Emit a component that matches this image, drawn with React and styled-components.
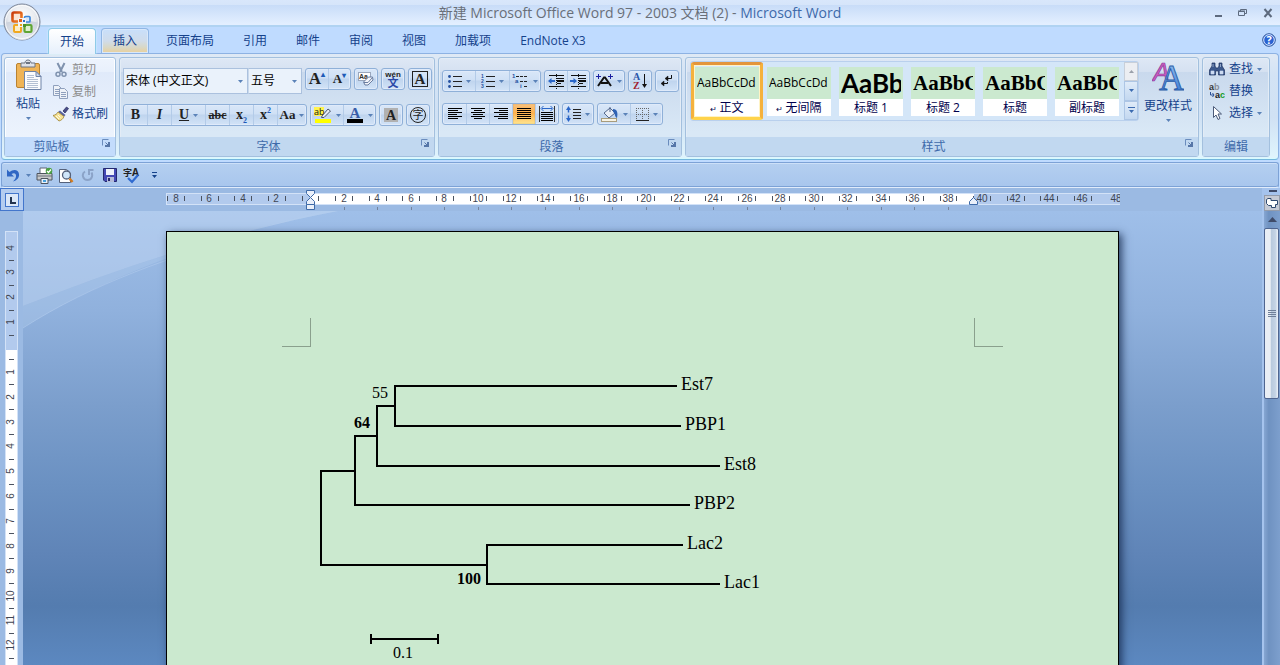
import React from "react";
import styled, { createGlobalStyle, css } from "styled-components";

const GlobalStyle = createGlobalStyle`
  * {
    box-sizing: border-box;
  }
  body {
    margin: 0;
    overflow: hidden;
    font-family: "Open Sans", "Noto Sans CJK SC", sans-serif;
    font-size: 12px;
    line-height: 16px;
    color: #15428b;
  }
  button,
  select {
    font: inherit;
    color: inherit;
  }
`;

const Window = styled.div`
  position: relative;
  display: flex;
  flex-direction: column;
  height: 100vh;
  background: #bfdbff;
`;

const plainButton = css`
  display: flex;
  align-items: center;
  justify-content: center;
  padding: 0;
  border: 0;
  background: none;
  white-space: nowrap;
`;

/* title bar */

const TitleBar = styled.header`
  display: grid;
  grid-template-columns: 1fr auto 1fr;
  align-items: center;
  flex: none;
  height: 27px;
  border-bottom: 2px solid #b0d3f2;
  background: linear-gradient(
    #d9e7fb 0,
    #d6e5fa 5px,
    #c8dcf8 5px,
    #e3efff 24px
  );
`;

const WindowTitle = styled.h1`
  grid-column: 2;
  margin: 0;
  font-size: 14px;
  font-weight: 400;
  line-height: 20px;
  color: #696f79;
  span {
    color: #3e6aaa;
  }
`;

const WindowControls = styled.div`
  display: flex;
  justify-content: flex-end;
`;

const WindowButton = styled.button`
  ${plainButton}
  width: 25px;
  height: 20px;
`;

const OfficeButton = styled.button`
  ${plainButton}
  position: absolute;
  left: 3px;
  top: 3px;
  width: 38px;
  height: 38px;
`;

/* tabs */

const TabRow = styled.nav`
  display: flex;
  align-items: flex-end;
  gap: 5px;
  flex: none;
  height: 26px;
  padding: 0 3px 0 48px;
`;

const Tab = styled.button`
  ${plainButton}
  height: 25px;
  padding: 0 11px;
  border: 1px solid transparent;
  border-bottom: 0;
  border-radius: 4px 4px 0 0;
  ${({ $state }) =>
    $state === "active" &&
    css`
      position: relative;
      margin-bottom: -1px;
      height: 26px;
      border-color: #8ecbe8;
      background: linear-gradient(#ffffff, #e6f0fc);
      box-shadow: 0 0 2px #d4fbff;
    `}
  ${({ $state }) =>
    $state === "hover" &&
    css`
      border-color: #90b6e4;
      background: linear-gradient(#c8dffb, #d0dcea 50%, #d8d8c8 75%, #ead09a);
      box-shadow: inset 0 0 0 1px #d9e8fa;
    `}
`;

const HelpButton = styled.button`
  ${plainButton}
  width: 16px;
  height: 26px;
  margin-left: auto;
`;

/* ribbon */

const Ribbon = styled.section`
  display: flex;
  gap: 3px;
  flex: none;
  margin: 0 1px;
  padding: 3px 8px 2px 2px;
  border: 1px solid #8db2e3;
  border-bottom-color: #74b6dc;
  border-radius: 4px;
  background: linear-gradient(#dfe9f5, #d3e3f5 20%, #d0e1f4 60%, #e0f5fd);
  box-shadow: inset 0 -1px 0 #d6fbff;
`;

const GroupBox = styled.section`
  display: flex;
  flex-direction: column;
  flex: ${({ $grow }) => ($grow ? "1 1 0" : "none")};
  width: ${({ $width }) => $width || "auto"};
  min-width: 0;
  height: 100px;
  border: 1px solid #a3c0de;
  border-radius: 3px;
  background: ${({ $hover }) =>
    $hover
      ? "linear-gradient(#eef4fd 0, #e8f0fc 14px, #e0eafa 14px, #f0f6fe)"
      : "linear-gradient(#dee8f5 0, #d5e1f1 14px, #c9d9ed 14px, #d9e8f6 75%)"};
  box-shadow: inset 0 0 0 1px ${({ $hover }) => ($hover ? "#fdfeff" : "#e3ecf6")};
`;

const GroupBody = styled.div`
  flex: 1;
  display: flex;
  flex-direction: ${({ $row }) => ($row ? "row" : "column")};
  gap: ${({ $gap }) => $gap || "0"};
  min-height: 0;
  padding: ${({ $pad }) => $pad || "0 3px"};
`;

const GroupTitle = styled.div`
  display: flex;
  align-items: center;
  flex: none;
  height: 19px;
  background: ${({ $hover }) => ($hover ? "#c3dcfc" : "#c1d8f0")};
  color: #3e6aaa;
  h2 {
    flex: 1;
    margin: 0;
    font-size: 12px;
    font-weight: 400;
    text-align: center;
  }
`;

const Launcher = styled.button`
  ${plainButton}
  align-items: flex-start;
  width: 17px;
  height: 15px;
`;

const Row = styled.div`
  display: flex;
  align-items: flex-start;
  gap: 3px;
  height: ${({ $height }) => $height || "22px"};
`;

const ButtonSet = styled.div`
  display: flex;
  height: 22px;
  border: 1px solid #8fb0d8;
  border-radius: 3px;
  background: linear-gradient(#d9e7f8 0, #cfe0f5 9px, #bfd4ee 10px, #d2e3f7);
  box-shadow: inset 0 0 0 1px #dfeafa;
`;

const ToolButton = styled.button`
  ${plainButton}
  gap: 4px;
  width: ${({ $width }) => $width || "22px"};
  color: #222;
  & + & {
    border-left: 1px solid #b3cbe8;
  }
  ${({ $pressed }) =>
    $pressed &&
    css`
      background: linear-gradient(#f9c27e, #fdb14e 45%, #ffe58f);
      box-shadow: inset 0 0 1px #8b7654;
    `}
`;

const Letter = styled.span`
  font-family: "Liberation Serif", serif;
  font-size: ${({ $size }) => $size || "14px"};
  font-weight: 700;
  font-style: ${({ $italic }) => ($italic ? "italic" : "normal")};
  text-decoration: ${({ $line }) => $line || "none"};
  line-height: 14px;
  sub,
  sup {
    font-size: 8px;
    line-height: 0;
    color: #1e5bb8;
  }
`;

const Combo = styled.label`
  position: relative;
  display: flex;
  align-items: center;
  flex: none;
  width: ${({ $width }) => $width};
  height: 26px;
  border: 1px solid #abc1de;
  background: #eaf2fb;
  & + & {
    margin-left: -3px;
    border-left-color: #c9d9ec;
  }
  svg {
    position: absolute;
    right: 4px;
    pointer-events: none;
  }
`;

const ComboSelect = styled.select`
  appearance: none;
  width: 100%;
  height: 24px;
  padding: 0 14px 0 2px;
  border: 0;
  background: none;
  color: #000;
`;

const LargeButton = styled.button`
  ${plainButton}
  flex-direction: column;
  justify-content: flex-start;
  flex: none;
  gap: 5px;
  width: ${({ $width }) => $width};
`;

const CommandList = styled.div`
  display: flex;
  flex-direction: column;
`;

const Command = styled.button`
  ${plainButton}
  justify-content: flex-start;
  gap: ${({ $gap }) => $gap || "3px"};
  height: 22px;
  color: ${({ disabled }) => (disabled ? "#8d8d8d" : "#15428b")};
`;

/* style gallery */

const Gallery = styled.div`
  display: flex;
  flex: 1;
  min-width: 0;
  height: 60px;
  border: 1px solid #b9d0ed;
  border-radius: 3px;
  background: #d4e6f8;
`;

const GalleryItems = styled.div`
  display: flex;
  flex: 1;
  min-width: 0;
  overflow: hidden;
`;

const StyleCard = styled.button`
  ${plainButton}
  flex: none;
  flex-direction: column;
  align-items: stretch;
  width: 72px;
  padding: 4px;
  color: #00004c;
  ${({ $selected }) =>
    $selected &&
    css`
      padding: 1px;
      border: 3px solid #f5b13d;
      border-color: #e3953c #f5b13d #ffd34b;
      border-radius: 3px;
      box-shadow: inset 0 0 0 1px #fff3c4;
    `}
`;

const StylePreview = styled.span`
  height: 32px;
  padding: 0 2px;
  background: #cbe9cf;
  color: #000;
  text-align: left;
`;

const StyleSample = styled.span`
  display: block;
  overflow: hidden;
  font-family: ${({ $font }) => $font || "inherit"};
  font-size: ${({ $size }) => $size || "12px"};
  font-weight: ${({ $size }) => ($size ? 700 : 400)};
  line-height: 32px;
`;

const StyleName = styled.span`
  height: 17px;
  background: #fff;
  line-height: 17px;
  small {
    font-size: 8px;
  }
`;

const GalleryScroll = styled.div`
  display: grid;
  flex: none;
  grid-template-rows: repeat(3, 1fr);
  width: 14px;
  button {
    ${plainButton}
    border: 1px solid #adc6e5;
    background: linear-gradient(#dfebf9, #c3d8f0);
  }
  button:disabled {
    border-color: #c8cfd9;
    background: #eceef2;
  }
`;

/* quick access */

const QuickAccess = styled.div`
  display: flex;
  align-items: center;
  flex: none;
  height: 26px;
  margin: 2px 1px 0;
  border: 1px solid #7da2d6;
  border-bottom-color: #e1ecfb;
  border-radius: 3px;
  background: linear-gradient(#b4cff0, #a8c6ed);
  box-shadow: inset 0 1px 0 #cde0f8, inset 0 -1px 0 #7da2d6;
`;

const QuickButton = styled.button`
  ${plainButton}
  width: ${({ $width }) => $width || "22px"};
  height: 22px;
`;

/* document area */

const Workspace = styled.main`
  display: flex;
  flex: 1;
  min-height: 0;
  background: #9bbae3;
`;

const DocumentColumn = styled.div`
  display: flex;
  flex-direction: column;
  flex: 1;
  min-width: 0;
`;

const RulerRow = styled.div`
  display: flex;
  flex: none;
  height: 23px;
`;

const TabSelector = styled.button`
  ${plainButton}
  flex: none;
  width: 24px;
  border: 1px solid #4376cc;
  background: #b5cdf0;
`;

const RulerCenter = styled.div`
  display: flex;
  flex: 1;
  justify-content: center;
`;

const CanvasRow = styled.div`
  display: flex;
  flex: 1;
  min-height: 0;
`;

const SideRuler = styled.div`
  flex: none;
  width: 23px;
  overflow: hidden;
`;

const Canvas = styled.div`
  position: relative;
  display: flex;
  justify-content: center;
  flex: 1;
  padding-top: 20px;
  overflow: hidden;
  background: linear-gradient(
    #9fbfe9 0,
    #90b1dd 22%,
    #7b9ecc 43%,
    #6b91c2 60%,
    #5f84b7 76%,
    #547caf 87%,
    #5c88c0 100%
  );
`;

const Swoosh = styled.svg`
  position: absolute;
  left: 0;
  top: 0;
`;

const Paper = styled.article`
  position: relative;
  flex: none;
  width: 953px;
  height: 1300px;
  padding-top: 86px;
  border: 1px solid #000;
  background: #cbe9cf;
  box-shadow: 3px 3px 8px rgba(20, 40, 75, 0.8);
`;

const MarginMarks = styled.div`
  display: flex;
  justify-content: space-between;
  padding: 0 115px;
`;

const MarginMark = styled.span`
  width: 29px;
  height: 29px;
  border: 0 solid #8aa08d;
  border-bottom-width: 1px;
  ${({ $side }) =>
    $side === "left" ? "border-right-width: 1px;" : "border-left-width: 1px;"}
`;

const Figure = styled.figure`
  margin: 0 144px;
`;

const ScrollColumn = styled.div`
  display: flex;
  flex-direction: column;
  flex: none;
  width: 18px;
  border-left: 2px solid #a5c3ed;
  background: linear-gradient(90deg, #86a6d2, #6f92c1 30%, #7d9fcd);
`;

const SplitHandle = styled.div`
  flex: none;
  height: 7px;
  background: #a5c3ed;
  padding: 2px 3px 0 5px;
  &::before {
    content: "";
    display: block;
    height: 2px;
    background: #3f4b69;
  }
`;

const RulerToggle = styled.button`
  ${plainButton}
  flex: none;
  height: 16px;
  border: 1px solid #949cab;
  background: #c5cad5;
`;

const ScrollArrow = styled.button`
  ${plainButton}
  flex: none;
  height: 17px;
`;

const ScrollThumb = styled.div`
  display: flex;
  align-items: center;
  justify-content: center;
  flex: none;
  height: 171px;
  margin-right: 1px;
  border: 1px solid #4f6590;
  border-radius: 2px;
  background: linear-gradient(90deg, #e9eef5 0 40%, #b9cade 50%, #c4d3e5 80%, #edf2f8);
`;

/* icons */

const Caret = ({ color = "#5a82b8" }) => (
  <svg width="5" height="3" viewBox="0 0 5 3">
    <path d="M0 0h5L2.5 3z" fill={color} />
  </svg>
);

const OfficeLogo = () => (
  <svg width="38" height="38" viewBox="0 0 38 38">
    <defs>
      <radialGradient id="orb" cx="50%" cy="35%" r="65%">
        <stop offset="0" stopColor="#ffffff" />
        <stop offset="0.6" stopColor="#e6e9ee" />
        <stop offset="1" stopColor="#a9b1c0" />
      </radialGradient>
      <linearGradient id="orbLow" x1="0" y1="0" x2="0" y2="1">
        <stop offset="0" stopColor="#c3cad6" />
        <stop offset="1" stopColor="#f4f6fa" />
      </linearGradient>
      <linearGradient id="flame" x1="0" y1="0" x2="1" y2="1">
        <stop offset="0" stopColor="#c93a0c" />
        <stop offset="1" stopColor="#f58a2a" />
      </linearGradient>
    </defs>
    <circle cx="19" cy="19" r="18" fill="url(#orb)" stroke="#7c8699" />
    <path d="M2 20a17 17 0 0 0 34 0c-9-3-25-3-34 0z" fill="url(#orbLow)" opacity="0.8" />
    <circle cx="19" cy="19" r="16.500" fill="none" stroke="#fff" opacity="0.8" />
    <rect x="9.500" y="9.500" width="9" height="9" rx="1.500" fill="#fbe4d4" stroke="url(#flame)" strokeWidth="2.600" />
    <rect x="21.500" y="13.500" width="5.500" height="5.500" rx="1" fill="#d9e9fb" stroke="#3f88da" strokeWidth="1.700" />
    <rect x="11" y="22" width="7" height="7" rx="1" fill="#fdeec5" stroke="#f1a820" strokeWidth="2" />
    <rect x="21.500" y="22" width="7" height="7" rx="1" fill="#dff0cc" stroke="#5fa534" strokeWidth="2.200" />
    <path d="M15 15h8v9h-8z" fill="#f3f4f6" />
    <rect x="16" y="16" width="3" height="3" fill="#e0601a" />
    <rect x="20" y="17" width="2" height="2" fill="#2d6fc6" />
    <rect x="17" y="21" width="2" height="2" fill="#eaa015" />
    <rect x="20" y="21" width="3" height="3" fill="#4c9128" />
  </svg>
);

const PasteIcon = () => (
  <svg width="32" height="32" viewBox="0 0 32 32">
    <rect x="4.500" y="4.500" width="23" height="24" rx="1.500" fill="#efb457" stroke="#b98231" />
    <path d="M9 8V4h4c0-4 6-4 6 0h4v4z" fill="#dfe2e8" stroke="#6c7482" />
    <path d="M14 4h4" stroke="#6c7482" strokeWidth="2" />
    <path d="M12.500 12.500H24l5 5V30.500H12.500z" fill="#fbfcfe" stroke="#6f84a8" />
    <path d="M24 12.500v5h5z" fill="#cfd9ea" stroke="#6f84a8" />
    <path d="M15 16.500h7M15 18.500h7M15 20.500h11M15 22.500h11M15 24.500h11M15 26.500h11M15 28.500h11" stroke="#b4c0d3" />
  </svg>
);

const CutIcon = () => (
  <svg width="16" height="16" viewBox="0 0 16 16" fill="none" stroke="#7f92ae">
    <path d="M4.500 1l4.500 9M11.500 1L7 10" strokeWidth="2" />
    <circle cx="5" cy="12.300" r="2" strokeWidth="1.500" />
    <circle cx="11" cy="12.300" r="2" strokeWidth="1.500" />
  </svg>
);

const CopyIcon = () => (
  <svg width="16" height="16" viewBox="0 0 16 16" fill="#eef2f8" stroke="#8fa0bd">
    <path d="M.5 1.500h5l3 3v7h-8z" />
    <path d="M2 5.500h4M2 7.500h4M2 9.500h4" />
    <path d="M6.500 4.500h5l3 3v7h-8z" />
    <path d="M8 8.500h5M8 10.500h5M8 12.500h5" />
  </svg>
);

const BrushIcon = () => (
  <svg width="16" height="16" viewBox="0 0 16 16">
    <path d="M10 5l3.500-4 2 1.500L12 7z" fill="#4a4f8a" stroke="#25285c" strokeWidth="0.700" />
    <path d="M7 4.500l5.500 4.500-1.500 1.500-6-4.500z" fill="#59639e" />
    <path d="M5 6l6 4.500c-1 2.500-3 4-5 4.500L0 9.500C2.500 9 4 8 5 6z" fill="#f5e194" stroke="#9c8230" strokeWidth="0.800" />
    <path d="M3 10l3 3M5 9l2.500 2.500" stroke="#fffbe0" />
  </svg>
);

const LauncherIcon = () => (
  <svg width="9" height="9" viewBox="0 0 9 9" fill="none">
    <path d="M.5 6.500V.5h6" stroke="#6a8cbd" />
    <path d="M3.500 3.500l3 3" stroke="#5676a8" />
    <path d="M7 3v4H3" stroke="#5676a8" strokeWidth="2" />
  </svg>
);

const EraserIcon = () => (
  <svg width="18" height="16" viewBox="0 0 18 16">
    <rect x="1.500" y="1.500" width="12" height="8" fill="#fff" stroke="#9aa7bd" />
    <text x="2" y="8" fontFamily="Liberation Sans" fontSize="7" fontWeight="700" fill="#333">Aa</text>
    <path d="M6.500 11l5-5h4l.5 3-5 5H8z" fill="#f3f5fa" stroke="#6a7da0" />
    <path d="M7 11.500h4l4.500-5" fill="none" stroke="#6a7da0" />
  </svg>
);

const PhoneticIcon = () => (
  <svg width="20" height="20" viewBox="0 0 20 20">
    <text x="10" y="8" textAnchor="middle" fontFamily="Liberation Sans" fontSize="8" fontWeight="700" fill="#222">wén</text>
    <text x="10" y="18" textAnchor="middle" fontSize="11" fontWeight="700" fill="#2b49a8">文</text>
  </svg>
);

const HighlightIcon = () => (
  <svg width="18" height="18" viewBox="0 0 18 18">
    <rect x="0" y="1" width="10" height="9" fill="#fff34d" />
    <text x="0" y="9" fontSize="9" fill="#111">ab</text>
    <path d="M8 10l6-7 2.500 2L10 11.500H7.500z" fill="#e8edf5" stroke="#49566e" />
    <rect x="1" y="13" width="16" height="4" fill="#ffff00" />
  </svg>
);

const FontColorIcon = () => (
  <svg width="18" height="18" viewBox="0 0 18 18">
    <text x="9" y="12" textAnchor="middle" fontFamily="Liberation Serif" fontWeight="700" fontSize="15" fill="#3a5da8">A</text>
    <rect x="1" y="13" width="16" height="4" fill="#000" />
  </svg>
);

const ListIcon = ({ numbered }) => (
  <svg width="14" height="16" viewBox="0 0 14 16">
    {[3, 8, 13].map((y, i) => (
      <g key={y}>
        {numbered ? (
          <text x="0" y={y + 2} fontFamily="Liberation Sans" fontSize="5" fontWeight="700" fill="#2450a0">{i + 1}</text>
        ) : (
          <circle cx="1.500" cy={y + 0.5} r="1.400" fill="#2450a0" />
        )}
        <path d={`M5 ${y + 0.5}h9`} stroke="#222" />
      </g>
    ))}
  </svg>
);

const MultiListIcon = () => (
  <svg width="17" height="16" viewBox="0 0 17 16">
    <g fontFamily="Liberation Sans" fontSize="6" fontWeight="700" fill="#2450a0">
      <text x="0" y="5">1</text>
      <text x="3" y="10">a</text>
      <text x="8" y="15">i</text>
    </g>
    <path d="M4 3.500h11M8 8.500h8M12 13.500h4" stroke="#222" strokeDasharray="3 1" />
  </svg>
);

const IndentIcon = ({ right }) => (
  <svg width="17" height="16" viewBox="0 0 17 16">
    <path d="M1 2.500h15M9 5.500h7M9 10.500h4M1 13.500h15" stroke="#111" />
    <path d="M9 8h7" stroke="#111" strokeWidth="2" />
    <path d="M8.500 1v15" stroke="#111" strokeDasharray="1 1" />
    <path d={right ? "M7 8L3.500 5v2H0v2h3.500v2z" : "M0 8l3.500-3v2H7v2H3.500v2z"} fill="#2a66c8" />
  </svg>
);

const AsianLayoutIcon = () => (
  <svg width="17" height="14" viewBox="0 0 17 14" fill="none">
    <path d="M2 12L8 3.500h1L15 12M5 9h7" stroke="#111" strokeWidth="2" />
    <path d="M2.500 0v5M0 2.500h5M14.500 0v5M12 2.500h5" stroke="#1b1fa0" />
  </svg>
);

const SortIcon = () => (
  <svg width="17" height="18" viewBox="0 0 17 18">
    <g fontFamily="Liberation Serif" fontWeight="700" fontSize="10">
      <text x="1" y="8" fill="#2a56a8">A</text>
      <text x="1" y="17" fill="#a02030">Z</text>
    </g>
    <path d="M12.500 2v12" stroke="#111" />
    <path d="M10 12h5l-2.500 4z" fill="#111" />
  </svg>
);

const MarksIcon = () => (
  <svg width="14" height="16" viewBox="0 0 14 16" fill="none" stroke="#111">
    <path d="M11.500 2v3.500H6M7.500 9v1.500H2" />
    <path d="M8 3v5L5 5.500zM4 8v5l-3-2.500z" fill="#111" strokeWidth="0.500" />
  </svg>
);

const alignments = {
  left: [14, 10, 14, 9, 14, 10],
  center: [14, 8, 14, 10, 14, 8],
  right: [14, 9, 14, 9, 14, 10],
  justify: [14, 14, 14, 14, 14, 14],
};

const AlignIcon = ({ kind }) => (
  <svg width="14" height="13" viewBox="0 0 14 13">
    {alignments[kind].map((w, i) => {
      let x = 0;
      if (kind === "center") x = (14 - w) / 2;
      if (kind === "right") x = 14 - w;
      return <rect key={i} x={x} y={i * 2} width={w} height="1" fill="#000" />;
    })}
  </svg>
);

const DistributeIcon = () => (
  <svg width="16" height="16" viewBox="0 0 16 16" fill="none">
    <path d="M.5 0v16M15.500 0v16" stroke="#333" />
    <path d="M2 6.500h12M2 8.500h12M2 10.500h12M2 12.500h12M2 14.500h12" stroke="#000" />
    <path d="M3 2.500h10M4.500 0L2 2.500 4.500 5M11.500 0L14 2.500 11.500 5" stroke="#2a66c8" />
  </svg>
);

const SpacingIcon = () => (
  <svg width="15" height="16" viewBox="0 0 15 16">
    <path d="M2.500 3v3.500M2.500 9.500V13" stroke="#2a66c8" strokeWidth="1.500" />
    <path d="M0 4l2.500-4L5 4zM0 12l2.500 4L5 12z" fill="#2a66c8" />
    <path d="M7 3.500h8M7 6.500h8M7 9.500h8M7 12.500h8" stroke="#222" />
  </svg>
);

const FillIcon = () => (
  <svg width="18" height="16" viewBox="0 0 18 16">
    <path d="M3 7l6-5 5 5-6 5z" fill="#e9eef7" stroke="#53678c" />
    <path d="M9 6V1" stroke="#53678c" />
    <path d="M12 3c4.500 0 5 4 4 9-2.500-1-1.500-5-4-6z" fill="#2f62b4" />
    <rect x="0.500" y="12.500" width="15" height="3" fill="#f7f3e4" stroke="#a89c7c" />
  </svg>
);

const BorderIcon = () => (
  <svg width="13" height="13" viewBox="0 0 13 13" stroke="#666" fill="none">
    <path d="M.5 0v12M6.500 0v12M12.500 0v12M0 .5h13M0 6.500h13" strokeDasharray="1 1" />
    <path d="M0 12.500h13" stroke="#222" />
  </svg>
);

const ChangeStylesIcon = () => (
  <svg width="32" height="32" viewBox="0 0 32 32">
    <defs>
      <linearGradient id="blueLetter" x1="0" y1="0" x2="0" y2="1">
        <stop offset="0" stopColor="#9cc8f5" />
        <stop offset="1" stopColor="#2f6fd0" />
      </linearGradient>
    </defs>
    <text x="1" y="20" fontFamily="Liberation Sans" fontStyle="italic" fontSize="25" fill="#cf5cc0" stroke="#8a3c9c" strokeWidth="0.700">A</text>
    <text x="7" y="29" fontFamily="Liberation Serif" fontSize="35" fill="url(#blueLetter)" stroke="#2c5da8" strokeWidth="0.900">A</text>
  </svg>
);

const FindIcon = () => (
  <svg width="16" height="14" viewBox="0 0 16 14">
    <path d="M3 1h3v3l1 2h2l1-2V1h3v3l2.500 4v5H9.500V9h-3v4H.5V8L3 4z" fill="#3c588c" stroke="#1d3260" strokeWidth="0.700" />
    <path d="M2 9h3v3H2zM11 9h3v3h-3zM4 2v3M11.500 2v3" fill="#cddcf2" stroke="#cddcf2" strokeWidth="0.600" />
  </svg>
);

const ReplaceIcon = () => (
  <svg width="16" height="16" viewBox="0 0 16 16" fontFamily="Liberation Sans" fontSize="9" fontWeight="700">
    <text x="0" y="7" fill="#333">a<tspan fill="#8a8f99">b</tspan></text>
    <text x="6" y="15" fill="#222">a<tspan fill="#179c28">c</tspan></text>
    <path d="M1.500 9v3h3M3.500 10l1.500 2-1.500 2" fill="none" stroke="#2a4f96" />
  </svg>
);

const SelectIcon = () => (
  <svg width="16" height="16" viewBox="0 0 16 16">
    <path d="M4.500 1.500v11l2.500-2.500 2 4.500 2-1-2-4.500h3.500z" fill="#fff" stroke="#4b5a78" />
  </svg>
);

const UndoIcon = () => (
  <svg width="14" height="16" viewBox="0 0 14 16">
    <path d="M1 2.500v7h7L5.500 7c3-2 5 0 4.500 2.500-.3 2-1.500 3.500-3 5 4-1 6.500-4 6-7.500C12.500 2.500 7.500 1.500 3.500 5z" fill="#2f66c4" />
  </svg>
);

const RedoIcon = () => (
  <svg width="14" height="16" viewBox="0 0 14 16" fill="none" stroke="#8ba3c8" strokeWidth="2">
    <path d="M4 4.500C0 7 2 13 6.500 13S12 8.500 10.500 5.500" />
    <path d="M8 8V3h4.500" />
  </svg>
);

const PrintIcon = () => (
  <svg width="17" height="17" viewBox="0 0 17 17">
    <path d="M4 1h7v6H4z" fill="#fff" stroke="#5e6574" />
    <path d="M1 6.500h15v6.500H1z" fill="#c7c8c9" stroke="#4e545f" />
    <path d="M1 9h15" stroke="#6b707a" />
    <path d="M5 11.500h7v5H5z" fill="#e9f2fc" stroke="#4e545f" />
    <path d="M7 14h3" stroke="#48a0dc" strokeWidth="2" />
    <circle cx="13" cy="4" r="3.300" fill="#4ba043" />
    <path d="M11 4l1.500 1.500L15 2.500" stroke="#fff" fill="none" strokeWidth="1.200" />
  </svg>
);

const PreviewIcon = () => (
  <svg width="16" height="17" viewBox="0 0 16 17">
    <path d="M1.500 2.500h7l4 3.500v9.500h-11z" fill="#fff" stroke="#55617a" />
    <circle cx="8.500" cy="8" r="4" fill="#cfe6fa" stroke="#55617a" strokeWidth="1.300" />
    <path d="M11.500 11.500l3 3.500" stroke="#d07a20" strokeWidth="2.500" />
  </svg>
);

const SaveIcon = () => (
  <svg width="14" height="14" viewBox="0 0 14 14">
    <path d="M.5.5h13v13H2l-1.500-1.500z" fill="#4348b4" stroke="#25296e" />
    <rect x="3" y="1" width="8" height="6" fill="#eef2fb" />
    <rect x="4" y="9" width="7" height="5" fill="#b4bbd8" />
    <rect x="5" y="10" width="2" height="3" fill="#25296e" />
  </svg>
);

const SpellIcon = () => (
  <svg width="18" height="17" viewBox="0 0 18 17">
    <text x="0" y="9" fontSize="9" fontWeight="700" fill="#222">字</text>
    <text x="9" y="9" fontSize="10" fontWeight="700" fill="#222">A</text>
    <path d="M5 11l4 4 6-7" fill="none" stroke="#2f6ad0" strokeWidth="2.200" />
  </svg>
);

const HelpIcon = () => (
  <svg width="14" height="14" viewBox="0 0 14 14">
    <circle cx="7" cy="7" r="6.300" fill="#2a63d2" stroke="#3a5f9c" />
    <circle cx="7" cy="7" r="5.300" fill="none" stroke="#dfeaff" />
    <text x="7" y="11" textAnchor="middle" fontSize="11" fontWeight="700" fill="#fff">?</text>
  </svg>
);

/* horizontal scale: the unit is one character of body text */

const scaleFont = '"Liberation Sans Narrow", "Liberation Sans", sans-serif';

const CHAR = 16.79;
const ZERO = 144;
const evens = Array.from({ length: 29 }, (_, i) => i * 2 - 8);
const halves = Array.from({ length: 56 }, (_, i) => i - 8.5);

const HorizontalRuler = () => (
  <svg width="954" height="23" viewBox="0 0 954 23">
    <rect x="0" y="5" width="954" height="12" fill="#b2caed" />
    <rect x={ZERO} y="5" width="664" height="12" fill="#fff" />
    <path d="M0 5.500h954M0 16.500h954M.5 5v12" stroke="#d3e2f7" />
    {halves.map((u) => (
      <rect key={u} x={Math.round(ZERO + u * CHAR)} y="8" width="1" height="5" fill="#4b5361" />
    ))}
    <g fontFamily={scaleFont} fontSize="10" fill="#3f4653" textAnchor="middle">
      {evens
        .filter((n) => n !== 0)
        .map((n) => (
          <text key={n} x={Math.round(ZERO + n * CHAR)} y="14">{Math.abs(n)}</text>
        ))}
    </g>
    {evens
      .filter((n) => n > 0 && n < 39)
      .map((n) => (
        <rect key={n} x={Math.round(ZERO + n * CHAR)} y="19" width="1" height="3" fill="#74839c" />
      ))}
    <g fill="#eaf0fa" stroke="#3f6ba8">
      <path d="M140.500 2.500h8v3l-4 4-4-4z" />
      <path d="M144.500 9.500l4 4v3h-8v-3z" />
      <path d="M140.500 16.500h8v5h-8z" />
      <path d="M807.500 9.500l4 4v3h-8v-3z" />
    </g>
  </svg>
);

/* vertical scale: about 25px per unit, zero where the body text starts */

const STEP = 24.85;
const VZERO = 136;
const rows = Array.from({ length: 17 }, (_, i) => i - 4);

const VerticalRuler = () => (
  <svg width="23" height="600" viewBox="0 0 23 600">
    <rect x="5" y="20" width="13" height="119" fill="#b2caed" />
    <rect x="5" y="139" width="13" height="461" fill="#fff" />
    <path d="M5.500 20v580M17.500 20v580M5 20.500h13" stroke="#d3e2f7" />
    {rows.map((n) => {
      const y = Math.round(VZERO + n * STEP);
      const mid = Math.round(VZERO + (n + 0.5) * STEP);
      return (
        <g key={n}>
          {n !== 0 && (
            <text
              x="14"
              y={y}
              transform={`rotate(-90 14 ${y})`}
              textAnchor="middle"
              fontFamily={scaleFont}
              fontSize="10"
              fill="#3f4653"
            >
              {Math.abs(n)}
            </text>
          )}
          <rect x="9" y={mid} width="5" height="1" fill="#4b5361" />
        </g>
      );
    })}
  </svg>
);

/* phylogenetic tree */

const leaves = [
  { name: "Est7", from: 84, to: 366, y: 39 },
  { name: "PBP1", from: 84, to: 370, y: 79 },
  { name: "Est8", from: 66, to: 409, y: 119 },
  { name: "PBP2", from: 44, to: 379, y: 158 },
  { name: "Lac2", from: 176, to: 372, y: 198 },
  { name: "Lac1", from: 176, to: 409, y: 237 },
];

const TreeFigure = () => (
  <svg width="663" height="330" viewBox="0 0 663 330" role="img" aria-label="Est7 PBP1 Est8 PBP2 Lac2 Lac1">
    <g stroke="#000" strokeWidth="2" fill="none" strokeLinecap="butt">
      {leaves.map((l) => (
        <path key={l.name} d={`M${l.from} ${l.y}H${l.to}`} />
      ))}
      <path d="M84 38v42M66 59h18M66 58v62M44 89h22M44 88v71M10 124h34M10 123v96M10 218h166M176 197v41" />
      <path d="M60 292h67M60 287v10M127 287v10" />
    </g>
    <g fontFamily="Liberation Serif" fontSize="18">
      {leaves.map((l) => (
        <text key={l.name} x={l.to + 4} y={l.y + 4}>{l.name}</text>
      ))}
    </g>
    <g fontFamily="Liberation Serif" fontSize="16">
      <text x="61" y="51">55</text>
      <text x="43" y="81" fontWeight="700">64</text>
      <text x="146" y="237" fontWeight="700">100</text>
      <text x="82" y="311">0.1</text>
    </g>
  </svg>
);

const Group = ({ title, launcher = true, hover, width, grow, children }) => (
  <GroupBox $hover={hover} $width={width} $grow={grow}>
    {children}
    <GroupTitle $hover={hover}>
      <h2>{title}</h2>
      {launcher && (
        <Launcher aria-label={title}>
          <LauncherIcon />
        </Launcher>
      )}
    </GroupTitle>
  </GroupBox>
);

const tabs = [
  { name: "开始", state: "active" },
  { name: "插入", state: "hover" },
  { name: "页面布局" },
  { name: "引用" },
  { name: "邮件" },
  { name: "审阅" },
  { name: "视图" },
  { name: "加载项" },
  { name: "EndNote X3" },
];

const cambria = '"Liberation Serif", serif';

const styleCards = [
  { name: "正文", sample: "AaBbCcDd", paragraph: true, selected: true },
  { name: "无间隔", sample: "AaBbCcDd", paragraph: true },
  { name: "标题 1", sample: "AaBb", size: "26px", font: "Lato, sans-serif" },
  { name: "标题 2", sample: "AaBbC", size: "21px", font: cambria },
  { name: "标题", sample: "AaBbC", size: "21px", font: cambria },
  { name: "副标题", sample: "AaBbC", size: "21px", font: cambria },
];

const ClipboardGroup = () => (
  <Group title="剪贴板" width="112px" hover>
    <GroupBody $row $gap="5px" $pad="1px 3px 0">
      <LargeButton $width="40px">
        <PasteIcon />
        粘贴
        <Caret />
      </LargeButton>
      <CommandList>
        <Command disabled>
          <CutIcon />
          剪切
        </Command>
        <Command disabled>
          <CopyIcon />
          复制
        </Command>
        <Command>
          <BrushIcon />
          格式刷
        </Command>
      </CommandList>
    </GroupBody>
  </Group>
);

const FontGroup = () => (
  <Group title="字体" width="316px">
    <GroupBody $gap="10px" $pad="10px 3px 0">
      <Row $height="26px">
        <Combo $width="125px">
          <ComboSelect aria-label="字体">
            <option>宋体 (中文正文)</option>
          </ComboSelect>
          <Caret />
        </Combo>
        <Combo $width="54px">
          <ComboSelect aria-label="字号">
            <option>五号</option>
          </ComboSelect>
          <Caret />
        </Combo>
        <ButtonSet>
          <ToolButton>
            <Letter $size="17px">A<sup>▴</sup></Letter>
          </ToolButton>
          <ToolButton>
            <Letter $size="13px">A<sup>▾</sup></Letter>
          </ToolButton>
        </ButtonSet>
        <ButtonSet>
          <ToolButton aria-label="清除格式">
            <EraserIcon />
          </ToolButton>
        </ButtonSet>
        <ButtonSet>
          <ToolButton aria-label="拼音指南">
            <PhoneticIcon />
          </ToolButton>
        </ButtonSet>
        <ButtonSet>
          <ToolButton aria-label="字符边框">
            <svg width="16" height="16" viewBox="0 0 16 16">
              <rect x="0.500" y="0.500" width="15" height="15" fill="none" stroke="#222" />
              <text x="8" y="13" textAnchor="middle" fontFamily="Liberation Serif" fontSize="15" fontWeight="700" fill="#222">A</text>
            </svg>
          </ToolButton>
        </ButtonSet>
      </Row>
      <Row>
        <ButtonSet>
          <ToolButton $width="23px">
            <Letter>B</Letter>
          </ToolButton>
          <ToolButton $width="24px">
            <Letter $italic>I</Letter>
          </ToolButton>
          <ToolButton $width="34px">
            <Letter $line="underline">U</Letter>
            <Caret />
          </ToolButton>
          <ToolButton $width="24px">
            <Letter $size="12px" $line="line-through">abc</Letter>
          </ToolButton>
          <ToolButton $width="24px">
            <Letter>x<sub>2</sub></Letter>
          </ToolButton>
          <ToolButton $width="24px">
            <Letter>x<sup>2</sup></Letter>
          </ToolButton>
          <ToolButton $width="29px">
            <Letter $size="13px">Aa</Letter>
            <Caret />
          </ToolButton>
        </ButtonSet>
        <ButtonSet>
          <ToolButton $width="32px" aria-label="突出显示">
            <HighlightIcon />
            <Caret />
          </ToolButton>
          <ToolButton $width="32px" aria-label="字体颜色">
            <FontColorIcon />
            <Caret />
          </ToolButton>
        </ButtonSet>
        <ButtonSet>
          <ToolButton aria-label="字符底纹">
            <svg width="14" height="14" viewBox="0 0 14 14">
              <rect width="14" height="14" fill="#b1b1b1" />
              <text x="7" y="12" textAnchor="middle" fontFamily="Liberation Serif" fontSize="14" fontWeight="700" fill="#222">A</text>
            </svg>
          </ToolButton>
        </ButtonSet>
        <ButtonSet>
          <ToolButton aria-label="带圈字符">
            <svg width="16" height="16" viewBox="0 0 16 16">
              <circle cx="8" cy="8" r="7.500" fill="none" stroke="#222" />
              <text x="8" y="12" textAnchor="middle" fontSize="11" fill="#222">字</text>
            </svg>
          </ToolButton>
        </ButtonSet>
      </Row>
    </GroupBody>
  </Group>
);

const ParagraphGroup = () => (
  <Group title="段落" width="244px">
    <GroupBody $gap="11px" $pad="12px 3px 0">
      <Row>
        <ButtonSet>
          <ToolButton $width="32px" aria-label="项目符号">
            <ListIcon />
            <Caret />
          </ToolButton>
          <ToolButton $width="34px" aria-label="编号">
            <ListIcon numbered />
            <Caret />
          </ToolButton>
          <ToolButton $width="31px" aria-label="多级列表">
            <MultiListIcon />
            <Caret />
          </ToolButton>
        </ButtonSet>
        <ButtonSet>
          <ToolButton aria-label="减少缩进">
            <IndentIcon />
          </ToolButton>
          <ToolButton aria-label="增加缩进">
            <IndentIcon right />
          </ToolButton>
        </ButtonSet>
        <ButtonSet>
          <ToolButton $width="30px" aria-label="中文版式">
            <AsianLayoutIcon />
            <Caret />
          </ToolButton>
        </ButtonSet>
        <ButtonSet>
          <ToolButton aria-label="排序">
            <SortIcon />
          </ToolButton>
        </ButtonSet>
        <ButtonSet>
          <ToolButton aria-label="显示编辑标记">
            <MarksIcon />
          </ToolButton>
        </ButtonSet>
      </Row>
      <Row>
        <ButtonSet>
          <ToolButton $width="23px" aria-label="左对齐">
            <AlignIcon kind="left" />
          </ToolButton>
          <ToolButton $width="23px" aria-label="居中">
            <AlignIcon kind="center" />
          </ToolButton>
          <ToolButton $width="23px" aria-label="右对齐">
            <AlignIcon kind="right" />
          </ToolButton>
          <ToolButton $width="23px" $pressed aria-label="两端对齐">
            <AlignIcon kind="justify" />
          </ToolButton>
          <ToolButton $width="23px" aria-label="分散对齐">
            <DistributeIcon />
          </ToolButton>
        </ButtonSet>
        <ButtonSet>
          <ToolButton $width="30px" aria-label="行距">
            <SpacingIcon />
            <Caret />
          </ToolButton>
        </ButtonSet>
        <ButtonSet>
          <ToolButton $width="32px" aria-label="底纹">
            <FillIcon />
            <Caret />
          </ToolButton>
          <ToolButton $width="32px" aria-label="边框">
            <BorderIcon />
            <Caret />
          </ToolButton>
        </ButtonSet>
      </Row>
    </GroupBody>
  </Group>
);

const StylesGroup = () => (
  <Group title="样式" grow>
    <GroupBody $row $gap="5px" $pad="3px 6px 0 4px">
      <Gallery>
        <GalleryItems>
          {styleCards.map((s) => (
            <StyleCard key={s.name} $selected={s.selected}>
              <StylePreview>
                <StyleSample $size={s.size} $font={s.font}>
                  {s.sample}
                </StyleSample>
              </StylePreview>
              <StyleName>
                {s.paragraph && <small>↵ </small>}
                {s.name}
              </StyleName>
            </StyleCard>
          ))}
        </GalleryItems>
        <GalleryScroll>
          <button disabled aria-label="上一行">
            <svg width="5" height="3" viewBox="0 0 5 3">
              <path d="M0 3h5L2.500 0z" fill="#9aa0aa" />
            </svg>
          </button>
          <button aria-label="下一行">
            <Caret color="#3c6bb0" />
          </button>
          <button aria-label="其他">
            <svg width="7" height="6" viewBox="0 0 7 6">
              <path d="M0 0h7v1H0zM1 3h5L3.500 6z" fill="#3c6bb0" />
            </svg>
          </button>
        </GalleryScroll>
      </Gallery>
      <LargeButton $width="48px">
        <ChangeStylesIcon />
        更改样式
        <Caret />
      </LargeButton>
    </GroupBody>
  </Group>
);

const EditingGroup = () => (
  <Group title="编辑" width="68px" launcher={false}>
    <GroupBody $pad="0 6px">
      <CommandList>
        <Command $gap="4px">
          <FindIcon />
          查找
          <Caret />
        </Command>
        <Command $gap="4px">
          <ReplaceIcon />
          替换
        </Command>
        <Command $gap="4px">
          <SelectIcon />
          选择
          <Caret />
        </Command>
      </CommandList>
    </GroupBody>
  </Group>
);

const App = () => (
  <Window>
    <GlobalStyle />
    <TitleBar>
      <WindowTitle>
        新建 Microsoft Office Word 97 - 2003 文档 (2) - <span>Microsoft Word</span>
      </WindowTitle>
      <WindowControls>
        <WindowButton aria-label="最小化">
          <svg width="10" height="10" viewBox="0 0 10 10">
            <rect x="2" y="7" width="7" height="2" fill="#5d6a7e" />
          </svg>
        </WindowButton>
        <WindowButton aria-label="还原">
          <svg width="10" height="10" viewBox="0 0 10 10" fill="none" stroke="#5d6a7e">
            <path d="M2.500 3V1.500h6v4H7" />
            <path d="M.5 3.500h6v4h-6zM0 3h7" />
          </svg>
        </WindowButton>
        <WindowButton aria-label="关闭">
          <svg width="10" height="10" viewBox="0 0 10 10">
            <path d="M1.500 1l7 8M8.500 1l-7 8" stroke="#5d6a7e" strokeWidth="2" />
          </svg>
        </WindowButton>
      </WindowControls>
    </TitleBar>
    <TabRow>
      {tabs.map((t) => (
        <Tab key={t.name} $state={t.state}>
          {t.name}
        </Tab>
      ))}
      <HelpButton aria-label="帮助">
        <HelpIcon />
      </HelpButton>
    </TabRow>
    <OfficeButton aria-label="Office">
      <OfficeLogo />
    </OfficeButton>
    <Ribbon>
      <ClipboardGroup />
      <FontGroup />
      <ParagraphGroup />
      <StylesGroup />
      <EditingGroup />
    </Ribbon>
    <QuickAccess>
      <QuickButton aria-label="撤消">
        <UndoIcon />
      </QuickButton>
      <QuickButton $width="9px" aria-label="撤消列表">
        <Caret />
      </QuickButton>
      <QuickButton aria-label="快速打印">
        <PrintIcon />
      </QuickButton>
      <QuickButton aria-label="打印预览">
        <PreviewIcon />
      </QuickButton>
      <QuickButton disabled aria-label="重复">
        <RedoIcon />
      </QuickButton>
      <QuickButton aria-label="保存">
        <SaveIcon />
      </QuickButton>
      <QuickButton aria-label="拼写检查">
        <SpellIcon />
      </QuickButton>
      <QuickButton aria-label="自定义">
        <svg width="5" height="6" viewBox="0 0 5 6">
          <path d="M0 0h5v1H0zM0 3h5L2.500 6z" fill="#15428b" />
        </svg>
      </QuickButton>
    </QuickAccess>
    <Workspace>
      <DocumentColumn>
        <RulerRow>
          <TabSelector aria-label="制表符">
            <svg width="14" height="14" viewBox="0 0 14 14">
              <rect x="0.500" y="0.500" width="13" height="13" fill="#dbe7f8" stroke="#4376cc" />
              <path d="M6 4v6h5" fill="none" stroke="#24344f" strokeWidth="2" />
            </svg>
          </TabSelector>
          <RulerCenter>
            <HorizontalRuler />
          </RulerCenter>
        </RulerRow>
        <CanvasRow>
          <SideRuler>
            <VerticalRuler />
          </SideRuler>
          <Canvas>
            <Swoosh width="420" height="130" viewBox="0 0 420 130">
              <path d="M0 0H315C200 22 100 56 0 95z" fill="#c5daf5" opacity="0.450" />
              <path d="M0 95C100 56 200 22 315 0H300C200 25 90 60 0 117z" fill="#b4cfee" opacity="0.350" />
              <path d="M0 117C70 72 150 45 230 22" fill="none" stroke="#bdd5f3" opacity="0.400" />
            </Swoosh>
            <Paper>
              <MarginMarks>
                <MarginMark $side="left" />
                <MarginMark $side="right" />
              </MarginMarks>
              <Figure>
                <TreeFigure />
              </Figure>
            </Paper>
          </Canvas>
        </CanvasRow>
      </DocumentColumn>
      <ScrollColumn>
        <SplitHandle />
        <RulerToggle aria-label="标尺">
          <svg width="12" height="12" viewBox="0 0 12 12" fill="#fff" stroke="#2f4a70">
            <path d="M.5 2.500l1.500-1h3v2h6.500v4h-2v3h-4v-2h-3l-2-2z" />
          </svg>
        </RulerToggle>
        <ScrollArrow aria-label="向上滚动">
          <svg width="9" height="5" viewBox="0 0 9 5">
            <path d="M4.500 0L9 5H0z" fill="#3f4b69" />
          </svg>
        </ScrollArrow>
        <ScrollThumb>
          <svg width="8" height="7" viewBox="0 0 8 7">
            <path d="M0 .5h8M0 2.500h8M0 4.500h8M0 6.500h8" stroke="#6f7f99" />
          </svg>
        </ScrollThumb>
      </ScrollColumn>
    </Workspace>
  </Window>
);

export default App;
